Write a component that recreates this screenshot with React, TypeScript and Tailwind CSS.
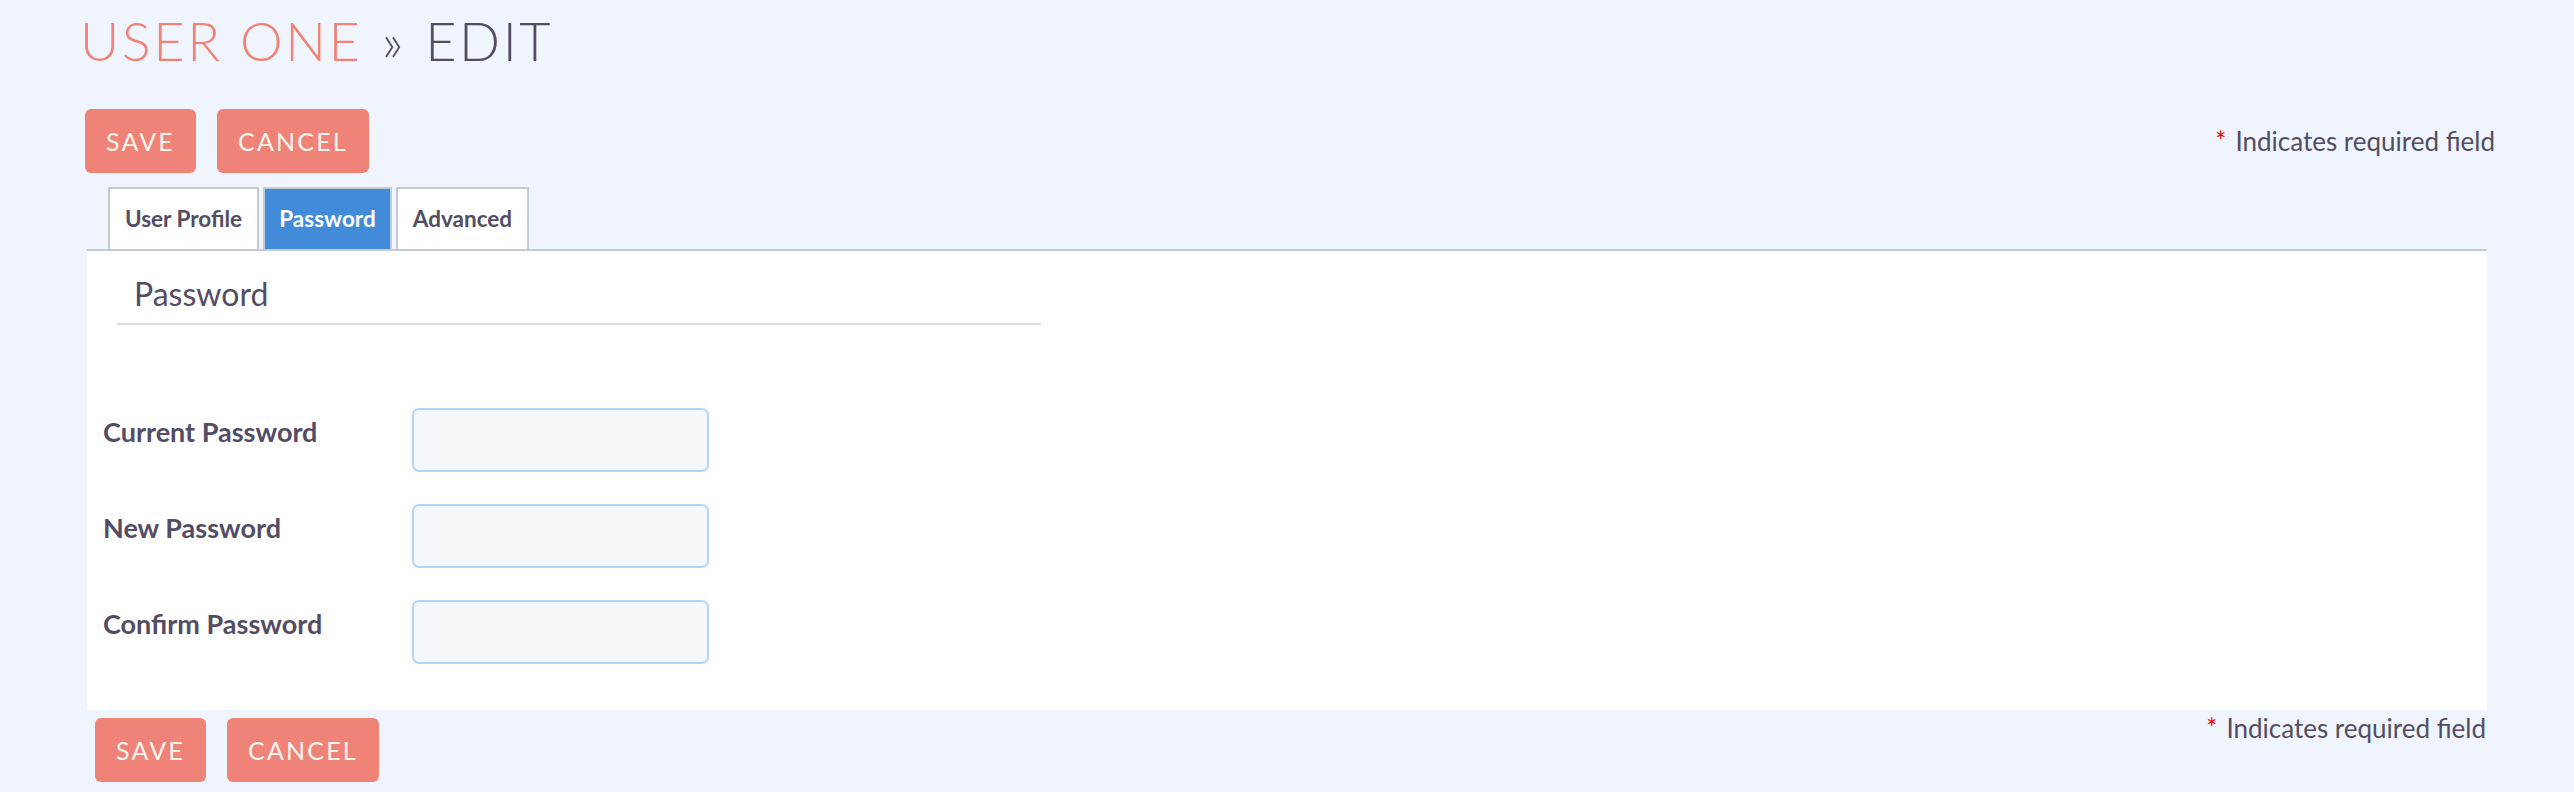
import React from "react";

const font = { fontFamily: "Lato, 'Noto Sans', sans-serif" };

function Btn({ children }: { children: React.ReactNode }) {
  return (
    <button className="h-[64px] px-[21px] rounded-[6px] bg-[#f08377] text-[#fbf5ee] text-[25px] tracking-[2.2px] leading-none uppercase">
      {children}
    </button>
  );
}

function Required({ className }: { className: string }) {
  return (
    <div className={`text-[26px] leading-none text-[#534d64] ${className}`}>
      <span className="text-[#ff0000] mr-[9px]">*</span>Indicates required field
    </div>
  );
}

function Row({ label }: { label: string }) {
  return (
    <div className="flex items-start">
      <div className="w-[309px] pt-[10px] text-[27px] leading-none font-bold text-[#534d64]">{label}</div>
      <input
        type="password"
        className="w-[297px] h-[64px] rounded-[7px] border-2 border-[#b3d6f8] bg-[#f5f9fc] outline-none"
      />
    </div>
  );
}

export default function App() {
  return (
    <div style={font} className="min-h-screen w-full bg-[#f0f5fd]">
      <div className="pt-[14px] pl-[80px] text-[54px] leading-none font-light tracking-[2.6px]">
        <span className="text-[#f08377]">USER ONE</span>
        <span className="text-[#534d64] [word-spacing:2px]"> » EDIT</span>
      </div>

      <div className="mt-[41px] flex items-center justify-between pl-[85px] pr-[79px]">
        <div className="flex gap-[21px]">
          <Btn>Save</Btn>
          <Btn>Cancel</Btn>
        </div>
        <Required className="" />
      </div>

      <div className="mt-[14px] ml-[87px] mr-[87px]">
        <div className="flex gap-[4px] pl-[21px] border-b-2 border-[#c1ccd6]">
          <div className="w-[151px] h-[62px] flex items-center justify-center border-2 border-b-0 border-[#c1ccd6] bg-white text-[22.5px] font-bold text-[#534d64]">
            User Profile
          </div>
          <div className="w-[129px] h-[62px] flex items-center justify-center border-2 border-b-0 border-[#c1ccd6] bg-[#428bd9] text-[22.5px] font-bold text-white">
            Password
          </div>
          <div className="w-[133px] h-[62px] flex items-center justify-center border-2 border-b-0 border-[#c1ccd6] bg-white text-[22.5px] font-bold text-[#534d64]">
            Advanced
          </div>
        </div>

        <div className="bg-white pt-[27px] pb-[46px]">
          <div className="ml-[30px] w-[924px] pl-[17px] pb-[13px] border-b-2 border-[#dddddd] text-[32px] leading-none text-[#534d64]">
            Password
          </div>
          <div className="mt-[83px] pl-[16px] flex flex-col gap-[32px]">
            <Row label="Current Password" />
            <Row label="New Password" />
            <Row label="Confirm Password" />
          </div>
        </div>
      </div>

      <div className="mt-[8px] flex items-start justify-between pl-[95px] pr-[88px]">
        <div className="flex gap-[21px]">
          <Btn>Save</Btn>
          <Btn>Cancel</Btn>
        </div>
        <Required className="-mt-[3px]" />
      </div>
    </div>
  );
}
